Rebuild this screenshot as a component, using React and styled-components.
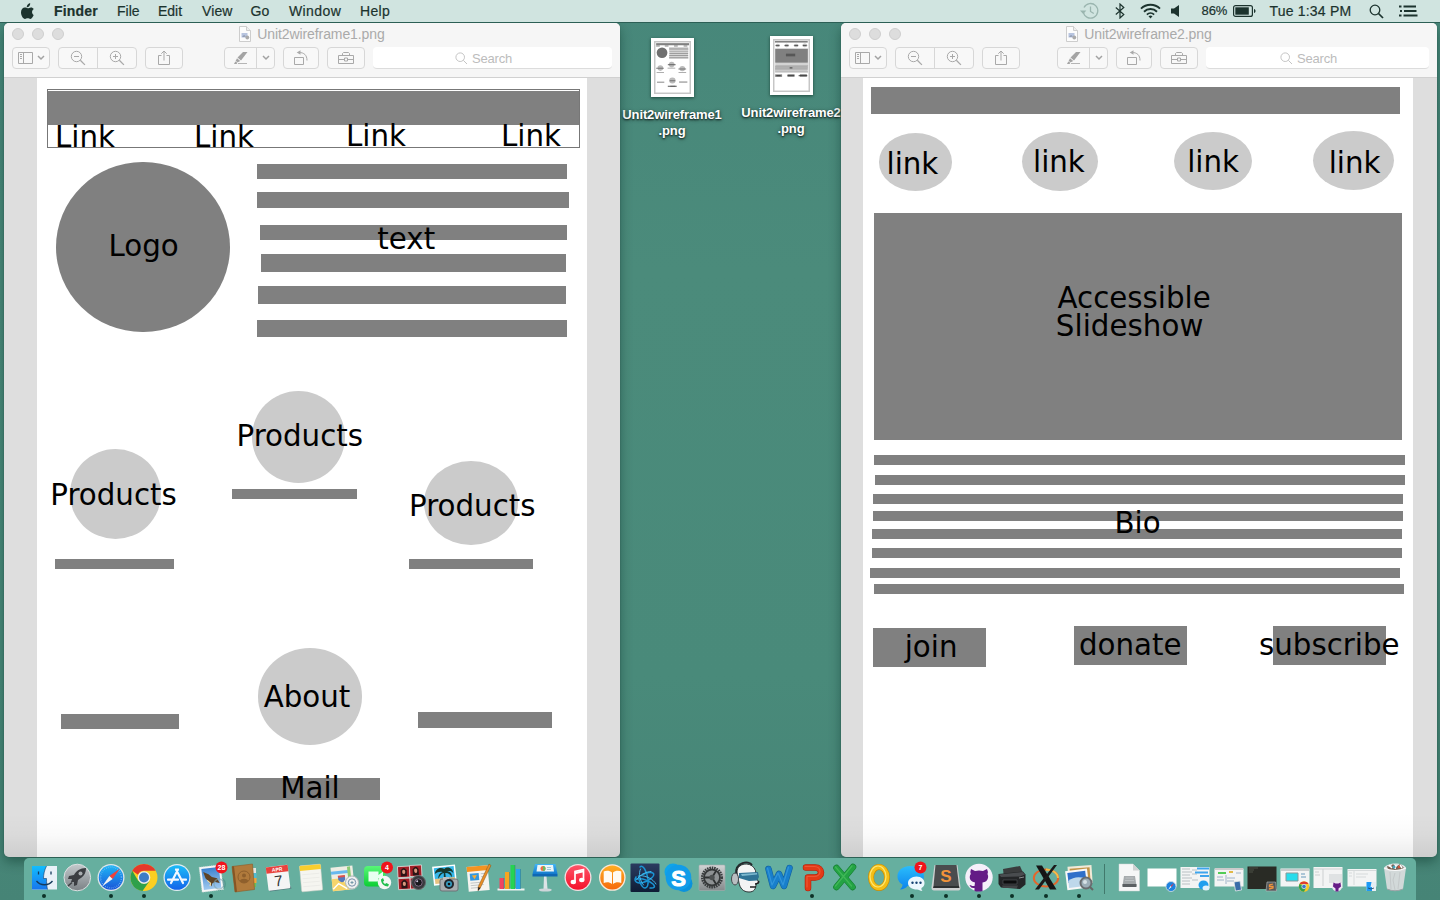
import React from "react";
import styled, { createGlobalStyle } from "styled-components";

const Global = createGlobalStyle`
  * { box-sizing: border-box; }
  html, body { margin: 0; padding: 0; overflow: hidden; }
  body { font-family: "Liberation Sans", Arial, sans-serif; }
  svg { display: block; flex: none; }
`;

const Desktop = styled.div`
  position: relative;
  display: flex;
  flex-direction: column;
  justify-content: space-between;
  width: 1440px;
  height: 900px;
  overflow: hidden;
  background: linear-gradient(180deg, #47877a 0%, #4b8b7b 30%, #498a7a 75%, #468476 100%);
`;

/* ---------- menu bar ---------- */

const MenuBar = styled.header`
  position: relative;
  z-index: 5;
  display: flex;
  align-items: center;
  height: 23px;
  padding-left: 20px;
  background: #d0e4e0;
  border-bottom: 1px solid #2c5f55;
  color: #1c332e;
  font-size: 14px;
  line-height: 22px;
  white-space: nowrap;
`;

const AppleSlot = styled.div`
  width: 34px;
`;

const MenuItem = styled.span`
  width: ${(p) => p.$w}px;
  font-weight: ${(p) => (p.$bold ? 700 : 400)};
  letter-spacing: ${(p) => p.$ls || 0}px;
  -webkit-text-stroke: 0.2px #1c332e;
`;

const StatusArea = styled.div`
  display: flex;
  align-items: center;
  height: 22px;
  margin-left: auto;
  width: 360px;
`;

const StatusSlot = styled.div`
  width: ${(p) => p.$w}px;
  font-size: ${(p) => p.$size || 14}px;
  letter-spacing: ${(p) => p.$ls || 0}px;
  -webkit-text-stroke: 0.2px #1c332e;
`;

/* ---------- windows ---------- */

const Window = styled.section`
  position: absolute;
  z-index: 2;
  left: ${(p) => p.$x}px;
  top: 23px;
  width: ${(p) => p.$w}px;
  height: 834px;
  display: flex;
  flex-direction: column;
  border-radius: 5px;
  overflow: hidden;
  background: #dedede;
`;

const WindowShadow = styled.div`
  position: absolute;
  z-index: 1;
  left: ${(p) => p.$x}px;
  top: 23px;
  width: ${(p) => p.$w}px;
  height: 834px;
  border-radius: 5px;
  box-shadow: 0 5px 12px rgba(0, 40, 30, 0.42), 0 0 1px rgba(0, 0, 0, 0.5);
`;

const Chrome = styled.div`
  flex: none;
  height: 55px;
  background: #f6f6f6;
  border-bottom: 1px solid #d1d1d1;
`;

const TitleRow = styled.div`
  display: grid;
  grid-template-columns: 60px 1fr 60px;
  align-items: center;
  height: 22px;
  padding: 0 8px;
`;

const Lights = styled.div`
  display: flex;
  gap: 8px;
`;

const Light = styled.span`
  width: 12px;
  height: 12px;
  border-radius: 50%;
  background: #dddddd;
  border: 1px solid #cecece;
`;

const Title = styled.div`
  display: flex;
  justify-content: center;
  align-items: center;
  gap: 6px;
  font-size: 14px;
  line-height: 22px;
  letter-spacing: -0.1px;
  color: #aaaaaa;
`;

const ToolRow = styled.div`
  display: flex;
  height: 22px;
  margin-top: 2px;
  padding: 0 8px;
`;

const ToolGroup = styled.div`
  display: flex;
  height: 22px;
  width: ${(p) => p.$w}px;
  margin-right: ${(p) => p.$mr}px;
  border: 1px solid #d7d7d7;
  border-radius: 4px;
  background: #f8f8f8;
`;

const ToolCell = styled.div`
  display: flex;
  flex: ${(p) => p.$flex || 1};
  align-items: center;
  justify-content: center;
  gap: ${(p) => p.$gap || 0}px;
  border-left: ${(p) => (p.$divided ? "1px solid #d7d7d7" : "none")};
`;

const SearchField = styled.div`
  display: flex;
  flex: 1;
  align-items: center;
  justify-content: center;
  gap: 4px;
  padding-right: 18px;
  padding-top: 1px;
  border-radius: 4px;
  background: #fff;
  border-bottom: 1px solid #dcdcdc;
  font-size: 13px;
  letter-spacing: -0.2px;
  color: #bcbcbc;
`;

const Viewer = styled.div`
  flex: 1;
  display: flex;
  position: relative;
  padding-left: ${(p) => p.$left}px;
`;

const BottomShade = styled.div`
  position: absolute;
  left: 0;
  right: 0;
  bottom: 0;
  height: 44px;
  background: linear-gradient(180deg, rgba(0, 0, 0, 0) 0%, rgba(0, 0, 0, 0.02) 50%, rgba(0, 0, 0, 0.075) 100%);
`;

const Page = styled.div`
  position: relative;
  width: ${(p) => p.$w}px;
  background: #fff;
`;

/* ---------- wireframe canvas ---------- */

const Block = styled.div`
  position: absolute;
  left: ${(p) => p.$x}px;
  top: ${(p) => p.$y}px;
  width: ${(p) => p.$w}px;
  height: ${(p) => p.$h}px;
  background: #808080;
`;

const Oval = styled(Block)`
  border-radius: 50%;
  background: ${(p) => (p.$dark ? "#808080" : "#cbcbcb")};
`;

const Frame = styled(Block)`
  background: transparent;
  border: 1px solid #777;
`;

const Label = styled.div`
  position: absolute;
  left: ${(p) => p.$x}px;
  top: ${(p) => p.$b - 24}px;
  font-family: "DejaVu Sans", sans-serif;
  font-size: 29.3px;
  line-height: 28px;
  letter-spacing: ${(p) => p.$ls || 0}px;
  color: #000;
  white-space: nowrap;
`;

/* ---------- desktop files ---------- */

const File = styled.div`
  position: absolute;
  left: ${(p) => p.$x}px;
  top: ${(p) => p.$y}px;
  width: 120px;
  display: flex;
  flex-direction: column;
  align-items: center;
  gap: 10px;
`;

const Thumb = styled.div`
  width: 43px;
  height: 59px;
  padding: 3px;
  background: #fff;
  box-shadow: 0 1px 3px rgba(0, 30, 20, 0.6);
`;

const FileName = styled.div`
  text-align: center;
  color: #fff;
  font-weight: 700;
  font-size: 13px;
  line-height: 16px;
  letter-spacing: -0.12px;
  text-shadow: 0 1px 2px rgba(0, 0, 0, 0.75), 0 1px 4px rgba(0, 0, 0, 0.4);
`;

/* ---------- dock ---------- */

const Dock = styled.footer`
  position: relative;
  z-index: 3;
  display: flex;
  width: 1392px;
  height: 42px;
  margin-left: 24px;
  padding-left: 3px;
  border-radius: 5px 5px 0 0;
  background: #66af9f;
`;

const DockItem = styled.div`
  flex: none;
  display: flex;
  flex-direction: column;
  align-items: center;
  width: ${(p) => p.$w || 33.42}px;
  padding-top: 2px;
`;

const RunDot = styled.span`
  width: 4px;
  height: 4px;
  border-radius: 50%;
  background: #0d3228;
`;

const DockDivider = styled.div`
  width: 16.2px;
  padding: 6px 0 6px 8px;
  &::before {
    content: "";
    display: block;
    width: 1px;
    height: 30px;
    background: #41796c;
  }
`;

/* ---------- toolbar icons ---------- */

const stroke = { fill: "none", stroke: "#a9a9a9", strokeWidth: 1 };

const SidebarIcon = () => (
  <svg width="15" height="12" viewBox="0 0 15 12" {...stroke}>
    <path d="M.5.5h14v11H.5zM5.5.5v11M2 2.5h2M2 4.5h2M2 6.5h2" />
  </svg>
);
const Chevron = () => (
  <svg width="8" height="6" viewBox="0 0 8 6" fill="none" stroke="#a2a2a2" strokeWidth="1.5">
    <path d="M1 1l3 3 3-3" />
  </svg>
);
const ZoomGlyph = ({ plus }) => (
  <svg width="16" height="16" viewBox="0 0 16 16" {...stroke}>
    <circle cx="6.5" cy="6.5" r="5.2" />
    <path d="M10.3 10.3l4.6 4.6" strokeWidth="1.3" />
    <path d={plus ? "M4 6.5h5M6.5 4v5" : "M4 6.5h5"} />
  </svg>
);
const ShareIcon = () => (
  <svg width="12" height="16" viewBox="0 0 12 16" {...stroke}>
    <path d="M3.5 5.5h-3v9h11v-9h-3M6 10.500V1M3.300 3.700L6 1l2.700 2.700" />
  </svg>
);
const MarkerIcon = () => (
  <svg width="16" height="14" viewBox="0 0 16 14">
    <path d="M14.500 1H10L4.500 6.500l3.500 3zM4 7.300L2.600 10l2.200 1.200L7.200 10zM2.300 10.500L1 13h2.500l1-1.300z" fill="#a4a4a4" />
    <path d="M5 12.500h9" stroke="#b5b5b5" />
  </svg>
);
const RotateIcon = () => (
  <svg width="16" height="16" viewBox="0 0 16 16" {...stroke}>
    <path d="M1.500 7.500h9v7h-9zM6 2.500c5 0 8 2.500 8 8" />
    <path d="M7.500.2v4.600L3.700 2.500z" fill="#a9a9a9" stroke="none" />
  </svg>
);
const ToolboxIcon = () => (
  <svg width="18" height="14" viewBox="0 0 18 14" {...stroke}>
    <path d="M1.500 4.500h15v8h-15zM1.500 8.500h6M10.500 8.500h6M7.500 7h3v3h-3zM5.500 4.500v-2l1-1h5l1 1v2" />
  </svg>
);
const SearchGlyph = () => (
  <svg width="13" height="13" viewBox="0 0 13 13" fill="none" stroke="#c4c4c4">
    <circle cx="5.200" cy="5.200" r="4.300" />
    <path d="M8.300 8.300l3.700 3.700" />
  </svg>
);
const DocIcon = () => (
  <svg width="12" height="16" viewBox="0 0 12 16">
    <path d="M.5.5h7l4 4v11H.5z" fill="#fcfcfc" stroke="#cdcdcd" />
    <path d="M7.500.5v4h4" fill="#eee" stroke="#cdcdcd" />
    <path d="M2.500 7h6v4.500h-6z" fill="#b7c4df" />
    <path d="M3 11l2-2 2 1.500z" fill="#8e97ad" />
    <circle cx="8.300" cy="11.500" r="1.900" fill="#aaa" />
  </svg>
);

function PreviewWindow({ x, w, name, gap, left, pageW, children }) {
  return (
    <>
      <WindowShadow $x={x} $w={w} />
      <Window $x={x} $w={w}>
        <Chrome>
          <TitleRow>
            <Lights><Light /><Light /><Light /></Lights>
            <Title><DocIcon /><span>{name}</span></Title>
          </TitleRow>
          <ToolRow>
            <ToolGroup $w={38} $mr={8}><ToolCell $gap={4}><SidebarIcon /><Chevron /></ToolCell></ToolGroup>
            <ToolGroup $w={79} $mr={8}>
              <ToolCell><ZoomGlyph /></ToolCell>
              <ToolCell $divided><ZoomGlyph plus /></ToolCell>
            </ToolGroup>
            <ToolGroup $w={38} $mr={gap}><ToolCell><ShareIcon /></ToolCell></ToolGroup>
            <ToolGroup $w={51} $mr={8}>
              <ToolCell $flex="0 0 31px"><MarkerIcon /></ToolCell>
              <ToolCell $divided><Chevron /></ToolCell>
            </ToolGroup>
            <ToolGroup $w={36} $mr={8}><ToolCell><RotateIcon /></ToolCell></ToolGroup>
            <ToolGroup $w={38} $mr={8}><ToolCell><ToolboxIcon /></ToolCell></ToolGroup>
            <SearchField><SearchGlyph /><span>Search</span></SearchField>
          </ToolRow>
        </Chrome>
        <Viewer $left={left}>
          <Page $w={pageW}>{children}</Page>
          <BottomShade />
        </Viewer>
      </Window>
    </>
  );
}

const homeBlocks = [
  [10.5, 13, 532, 34], [220, 86.3, 310.400, 15], [220, 114.400, 311.700, 15.200], [222.500, 146.700, 307.900, 15],
  [223.700, 176, 305.500, 17.700], [221, 208.200, 308, 17.800], [220, 241.600, 310.400, 17.700],
  [195.400, 411.200, 124.500, 10.300], [18, 480.500, 119.300, 10.300], [372.400, 480.500, 123.300, 10.300],
  [24.400, 636, 118, 15.300], [381.400, 633.500, 133.500, 16.300], [199, 700.200, 144, 21.800],
];
const homeOvals = [
  [19.300, 83.600, 173.400, 170.800, true], [215, 313.300, 93, 91.300], [32.500, 371, 91.700, 90.200],
  [387, 382.700, 93.500, 84], [221, 570, 104, 96.700],
];
const homeLabels = [
  ["Link", 18, 69], ["Link", 157, 69], ["Link", 309, 68], ["Link", 464, 68],
  ["Logo", 71.500, 177.500], ["text", 340.300, 171], ["Products", 199.500, 368], ["Products", 13.300, 426.500],
  ["Products", 372, 437.500], ["About", 226.700, 629.400], ["Mail", 243.200, 720.400],
];
const slideBlocks = [
  [7.500, 9, 529.400, 27], [11.400, 134.800, 528, 227.400],
  [11.400, 376.700, 530.500, 10], [12, 397, 530.400, 10.300], [9.500, 416, 530.400, 10.300], [10, 433.200, 530.400, 10],
  [9, 451, 530.400, 10.200], [9, 470.200, 530.400, 10.200], [7.200, 489.500, 530.200, 10.200], [11, 506.200, 530.400, 10.200],
  [10.400, 549.800, 112.700, 39.700], [210.700, 548, 113.300, 39.400], [409.800, 548, 113.300, 39.400],
];
const slideOvals = [
  [15.500, 55.300, 73, 57.700], [159, 54, 76, 59], [311, 54, 78, 58], [449.700, 52.700, 81, 59],
];
const slideLabels = [
  ["link", 23.500, 96], ["link", 170, 94], ["link", 324.200, 94], ["link", 465.700, 95],
  ["Accessible", 194.500, 230], ["Slideshow", 192.800, 258, 0.05], ["Bio", 251.500, 455.300],
  ["join", 41.700, 579], ["donate", 216, 577.400], ["subscribe", 396, 577],
];

const Wireframe = ({ blocks, ovals, labels, frame }) => (
  <>
    {blocks.map(([x, y, w, h]) => <Block key={`${x},${y}`} $x={x} $y={y} $w={w} $h={h} />)}
    {frame && <Frame $x={10} $y={11} $w={533} $h={59} />}
    {ovals.map(([x, y, w, h, dark]) => <Oval key={`${x},${y}`} $x={x} $y={y} $w={w} $h={h} $dark={dark} />)}
    {labels.map(([t, x, b, ls]) => <Label key={`${t}${x}`} $x={x} $b={b} $ls={ls}>{t}</Label>)}
  </>
);

/* Miniature of a wireframe, reduced from the same shape lists. */
const Mini = ({ blocks, ovals, children }) => (
  <svg width="37" height="53" viewBox="0 0 550 788" preserveAspectRatio="none">
    <rect x="11" y="11" width="528" height="766" fill="#fff" stroke="#c6c6c6" strokeWidth="22" />
    <g transform="translate(22 20) scale(.92 .92)">
      {blocks.map(([x, y, w, h]) => <rect key={`${x},${y}`} x={x} y={y} width={w} height={h} fill="#808080" />)}
      {ovals.map(([x, y, w, h, dark]) => (
        <ellipse key={`${x},${y}`} cx={x + w / 2} cy={y + h / 2} rx={w / 2} ry={h / 2} fill={dark ? "#707070" : "#bbb"} />
      ))}
      {children}
    </g>
  </svg>
);

/* ---------- dock artwork (34 x 34 each) ---------- */

const Svg = ({ children }) => <svg width="34" height="34" viewBox="0 0 34 34">{children}</svg>;
const Grad = ({ id, a, b, h }) => (
  <linearGradient id={id} x1="0" y1="0" x2={h ? 1 : 0} y2={h ? 0 : 1}>
    <stop stopColor={a} /><stop offset="1" stopColor={b} />
  </linearGradient>
);
const Badge = ({ x, y, t }) => (
  <>
    <circle cx={x} cy={y} r="6" fill="#f0131b" />
    <text x={x} y={y + 2.600} fontSize="7" fill="#fff" fontWeight="700" textAnchor="middle" fontFamily="Liberation Sans, sans-serif">{t}</text>
  </>
);
const Letter = ({ t, fill, size, y = 27, x = 17, font = "Liberation Sans", outline }) => (
  <text x={x} y={y} fontSize={size} fill={fill} fontWeight="700" textAnchor="middle" stroke={outline} strokeWidth={outline ? 1 : 0}
    fontFamily={`${font}, sans-serif`}>{t}</text>
);

const FinderArt = () => (
  <Svg>
    <defs><Grad id="fin" a="#12bdfd" b="#1876ee" /></defs>
    <rect x="5" y="6" width="25" height="23.500" fill="#e9f1f8" />
    <path d="M5 6h14.500c-2 4-3 8-3 12.500h3c0 4 .3 8 1 11H5z" fill="url(#fin)" />
    <path d="M11.500 11.500v3M24 11.500v3M9.500 21c4 5 12 5 16 0" fill="none" stroke="#153a5c" strokeWidth="1.300" />
    <path d="M19.500 6c-2 4-3 8-3 12.500h3c0 4 .3 8 1 11" fill="none" stroke="#163b66" strokeWidth=".6" />
  </Svg>
);
const LaunchArt = () => (
  <Svg>
    <defs><Grad id="lau" a="#c3c9cc" b="#7b8185" /></defs>
    <circle cx="17.300" cy="17.500" r="13.300" fill="url(#lau)" stroke="#dce2e3" />
    <path d="M26 8c-6 0-10 3-12 7l-5 1-1 3 4 0-1 3 3 0 0 4 3-1 1-5c5-3 8-6 8-12z" fill="#3b3e42" />
    <circle cx="20.500" cy="13.500" r="2" fill="#a8adb0" />
    <path d="M8 26l4-3.500" stroke="#3b3e42" strokeWidth="1.500" />
  </Svg>
);
const SafariArt = () => (
  <Svg>
    <defs><Grad id="saf" a="#1fb6f5" b="#1a55d8" /></defs>
    <circle cx="17" cy="17.500" r="13.500" fill="#dfe6ea" />
    <circle cx="17" cy="17.500" r="12.200" fill="url(#saf)" />
    <circle cx="17" cy="17.500" r="10.500" fill="none" stroke="#8cc9f8" strokeWidth="1.500" strokeDasharray=".5 1.500" />
    <path d="M26 8.500l-7.400 10.600-3.200-3.200z" fill="#f2413a" />
    <path d="M8 26.500l7.400-10.600 3.200 3.200z" fill="#f3f3f3" />
  </Svg>
);
const ChromeArt = () => (
  <Svg>
    <circle cx="17" cy="17.500" r="13.500" fill="#fbcf22" />
    <path d="M5.300 10.800A13.500 13.500 0 0 0 15.500 31L22.500 21l-5.500 3-6-3.500z" fill="#2fa04b" />
    <path d="M5.300 10.800A13.500 13.500 0 0 1 28.700 10.800H17a6.500 6.500 0 0 0-6 4z" fill="#e5392b" />
    <circle cx="17" cy="17.500" r="6.300" fill="#eee" />
    <circle cx="17" cy="17.500" r="5" fill="#3d7cc6" />
  </Svg>
);
const AppStoreArt = () => (
  <Svg>
    <defs><Grad id="aps" a="#1cbcf8" b="#1364ea" /></defs>
    <circle cx="17" cy="17.500" r="13.500" fill="#e1edf2" />
    <circle cx="17" cy="17.500" r="12.300" fill="url(#aps)" />
    <path d="M18 9.500l-7 13.500M16 9.500l7 13.500M8 19.700h10M21.500 19.700h4.500" stroke="#f3f8ff" strokeWidth="2.200" fill="none" strokeLinecap="round" />
  </Svg>
);
const MailArt = () => (
  <Svg>
    <defs><Grad id="mai" a="#3d82cf" b="#9fc9ef" /></defs>
    <circle cx="25" cy="24" r="7" fill="#4a9588" opacity=".7" />
    <g transform="rotate(-7 17 18)">
      <rect x="6.500" y="6" width="21.500" height="25" fill="#f6f7f7" stroke="#d4dada" strokeWidth=".6" strokeDasharray="1 1" />
      <rect x="8.500" y="8" width="17.500" height="21" fill="url(#mai)" />
      <path d="M10 11l5 3 3 3 5 2 2 5-4.500-1.500-3 1-1 3-2-5-3-4z" fill="#5f4325" />
      <path d="M13 20l3 3-1 3" fill="none" stroke="#f5dfa0" />
    </g>
    <circle cx="25" cy="24" r="5" fill="none" stroke="#7fa3ad" strokeWidth="1.500" opacity=".6" />
    <Badge x={27.500} y={7.500} t="28" />
  </Svg>
);
const ContactsArt = () => (
  <Svg>
    <path d="M26 8h3v5h-3z" fill="#e5e5e0" /><path d="M26 13h3.500v5H26z" fill="#53bcd2" />
    <path d="M26 18h3.500v5H26z" fill="#f0a63c" /><path d="M26 23h3v4h-3z" fill="#70bf55" />
    <path d="M5 6.500L25.500 4l2 25.500L8 32z" fill="#b07a3c" stroke="#8c5b26" strokeWidth=".6" />
    <path d="M5 6.500l2-.3 3 25.500-2 .3z" fill="#855525" />
    <circle cx="17" cy="17" r="6" fill="none" stroke="#8e5f2c" />
    <circle cx="17" cy="15.500" r="2" fill="#8e5f2c" /><path d="M12.800 21c1-3 7.500-3 8.500 0-2 2.500-6 2.500-8.500 0z" fill="#8e5f2c" />
  </Svg>
);
const CalendarArt = () => (
  <Svg>
    <path d="M8 29l21.500-3 1 2.500L9 31.500z" fill="#456" opacity=".6" />
    <g transform="rotate(-7 17 17)">
      <rect x="6" y="6" width="22" height="23.500" rx="1" fill="#f5f5f5" />
      <path d="M6 6h22v6.500H6z" fill="#e8423d" />
      <Letter t="APR" fill="#fff" size={5} y={11.200} />
      <text x="17" y="26" fontSize="15" fill="#333" textAnchor="middle" fontFamily="Liberation Sans, sans-serif">7</text>
    </g>
  </Svg>
);
const NotesArt = () => (
  <Svg>
    <g transform="rotate(-5 17 17)">
      <rect x="6.500" y="5" width="21" height="26" rx="1" fill="#f5f5f0" stroke="#d3d3c8" strokeWidth=".5" />
      <path d="M6.500 5h21v5h-21z" fill="#f8ce2e" />
      <path d="M8.500 14h17M8.500 18h17M8.500 22h17M8.500 26h17" stroke="#e8e8e3" strokeWidth=".7" />
    </g>
  </Svg>
);
const MapsArt = () => (
  <Svg>
    <g transform="rotate(-6 17 17)">
      <rect x="4.500" y="6.500" width="22" height="23.500" fill="#efede3" />
      <path d="M4.500 18h10l7 12H4.500z" fill="#f6d46a" /><path d="M4.500 10.500h17v3h-17z" fill="#68b9ee" />
      <path d="M21 7h3v15h-3z" fill="#8ccb72" />
      <path d="M11 15.500h7v4q-3.500 5-7 0z" fill="#5478bd" /><path d="M11 15h7v2h-7z" fill="#df514b" />
      <path d="M5 28l6-5 8 6" stroke="#fff" strokeWidth="1.500" fill="none" />
    </g>
    <circle cx="25" cy="22.500" r="6.500" fill="#eef0f0" stroke="#aeb7ba" />
    <circle cx="25" cy="22.500" r="3.700" fill="none" stroke="#7990aa" /><path d="M25 21v3M23.500 22.500h3" stroke="#79a" />
  </Svg>
);
const FaceTimeArt = () => (
  <Svg>
    <defs><Grad id="fac" a="#58f777" b="#0cce34" /></defs>
    <rect x="3" y="6" width="21.500" height="20.500" rx="4" fill="url(#fac)" />
    <path d="M7.500 11.500h10v10h-10zM17.500 15l4.500-3.500v10l-4.500-3.500z" fill="#e9fff0" />
    <circle cx="23.500" cy="22.500" r="6.700" fill="#f4f7f5" />
    <path d="M20 19.500c0 4 3 7 7 7l1-2-2.500-1.500-1.500 1c-1-.5-1.500-1.300-2-2.300l1.200-1L22 18z" fill="#21bf50" />
    <Badge x={26} y={7.500} t="4" />
  </Svg>
);
const PhotoBoothArt = () => (
  <Svg>
    <g transform="rotate(-3 17 17)">
      {[[4, 6], [16, 5.500], [4, 18], [16, 18]].map(([x, y]) => (
        <g key={`${x}-${y}`}>
          <rect x={x} y={y} width="12" height="11" fill="#a31d25" stroke="#eee" strokeWidth=".7" />
          <path d={`M${x + 3} ${y + 10}V${y + 4}q3-5 6 0v6z`} fill="#2b1416" />
          <ellipse cx={x + 6} cy={y + 5.500} rx="1.600" ry="2.200" fill="#d8967c" />
        </g>
      ))}
    </g>
    <circle cx="24.500" cy="22.500" r="7" fill="#383a3e" stroke="#65686c" />
    <circle cx="24.500" cy="22.500" r="3.700" fill="#17181c" stroke="#7c6780" /><circle cx="23.200" cy="21.200" r="1" fill="#c9c4dd" />
  </Svg>
);
const IPhotoArt = () => (
  <Svg>
    <g transform="rotate(-6 17 15)">
      <rect x="5" y="5.500" width="23" height="19" fill="#fff" />
      <path d="M6.500 7h20v12h-20z" fill="#36b7e9" /><path d="M6.500 18h20v5h-20z" fill="#e8c381" />
      <path d="M17 9c-4-3-9-1-10 4 3-2 6-2 8-1-3 0-5 3-5 6 2-3 4-5 6-5l-1 11h2.500l0-11c3 0 5 2 6 5 1-4-1-6-4-6 2-1 4-1 6 2 0-5-5-8-8.500-5z" fill="#16382c" />
    </g>
    <rect x="12" y="19" width="18" height="12" rx="2" fill="#a8adb0" stroke="#6c7377" />
    <path d="M15 17h6v3h-6z" fill="#babfc1" />
    <circle cx="21" cy="24" r="5" fill="#22262c" /><circle cx="21" cy="24" r="3" fill="#369cc1" /><circle cx="21" cy="24" r="1.300" fill="#111" />
  </Svg>
);
const PagesArt = () => (
  <Svg>
    <g transform="rotate(-5 17 17)">
      <rect x="6.500" y="6" width="21" height="25" fill="#f5f4f0" /><path d="M6.500 6h21v5h-21z" fill="#f59321" />
      <path d="M9 13h9v7H9z" fill="#3498df" /><path d="M11 15h5l-2.500 4z" fill="#f8ab32" />
      <path d="M9 22.500h13M9 25h13M9 27.500h10M20 14h4M20 17h4" stroke="#b9bcbc" strokeWidth=".8" />
    </g>
    <path d="M28 4l2 1.500-10.500 22-2.500 3 .3-4z" fill="#e98e26" stroke="#875214" strokeWidth=".5" /><path d="M17.300 27l2.200 1-2.500 3z" fill="#222" />
  </Svg>
);
const NumbersArt = () => (
  <Svg>
    <path d="M3.500 28.500h27v2h-27z" fill="#edf2f0" />
    <path d="M5.500 18h4.500v11H5.500z" fill="#f14360" /><path d="M11 12h4.500v17H11z" fill="#f8a51f" />
    <path d="M16.500 5H21v24h-4.500z" fill="#25d451" /><path d="M22 9h4.500v20H22z" fill="#28a5ed" />
    <path d="M10 18v11M15.500 12v17M21 5v24M26.500 9v20" stroke="#286b78" opacity=".4" />
  </Svg>
);
const KeynoteArt = () => (
  <Svg>
    <defs><Grad id="key" a="#43b5f4" b="#1379cd" /></defs>
    <path d="M16 16h2.500l1 13h-4z" fill="#dde3e6" /><ellipse cx="17.300" cy="30" rx="6.500" ry="1.600" fill="#cfd6da" />
    <path d="M7 4h20.500L29.500 14H4.500z" fill="url(#key)" /><path d="M4.500 14h25v2.500h-25z" fill="#0f67b3" />
    <path d="M9.500 5h15.500l1 6.500H8.500z" fill="#edf6f8" /><circle cx="15" cy="8.500" r="2.500" fill="#ed6f49" /><path d="M15 6a2.500 2.500 0 0 1 0 5z" fill="#66bd63" /><path d="M19 7.500h4M19 9.500h4" stroke="#9fc8d8" />
  </Svg>
);
const ITunesArt = () => (
  <Svg>
    <defs><Grad id="itu" a="#ff5267" b="#f4122b" /></defs>
    <circle cx="17" cy="17.500" r="13.500" fill="#f4dfe1" /><circle cx="17" cy="17.500" r="12.200" fill="url(#itu)" />
    <path d="M14 21.500V11.500l8.500-2v10" fill="none" stroke="#fff" strokeWidth="1.700" /><path d="M14 12l8.500-2v2.300l-8.500 2z" fill="#fff" />
    <ellipse cx="12.300" cy="22" rx="2.700" ry="2.200" fill="#fff" /><ellipse cx="20.800" cy="20" rx="2.700" ry="2.200" fill="#fff" />
  </Svg>
);
const IBooksArt = () => (
  <Svg>
    <defs><Grad id="ibo" a="#ffad21" b="#f66a0d" /></defs>
    <circle cx="17.300" cy="17.500" r="13.300" fill="#f8e9da" /><circle cx="17.300" cy="17.500" r="12" fill="url(#ibo)" />
    <path d="M17 12.500c-2-2-6-2-8.300-1v11.500c2.500-1 6-1 8.300 1zM18 12.500c2-2 6-2 8.300-1v11.500c-2.500-1-6-1-8.300 1z" fill="#fffaf2" />
  </Svg>
);
const BattleArt = () => (
  <Svg>
    <defs><Grad id="bat" a="#2b3b60" b="#0e1d35" /></defs>
    <rect x="2.500" y="3.500" width="29" height="28.500" rx="1" fill="url(#bat)" />
    <g fill="none" stroke="#1a93d3" strokeWidth="1.500" strokeLinecap="round">
      <path d="M12 7c3-3 7 5 8 12 .6 5-.5 9-3 9-3 0-6-6-6.500-12" />
      <path d="M8 17c-3 5 2 7 7 5.500C21 21 27 16 25.500 13.500c-1.500-2-7-1-11 1" />
      <path d="M8 19c5-1 12 1 17 5 3 3 1 4.500-3 4" />
      <path d="M12.500 9c-2 4-1 11 3 16M23 11.500c-5 0-12 4-14.500 8.500M28 24c-3-5-9-8-16-8.500" stroke="#49c2f3" strokeWidth=".9" />
    </g>
  </Svg>
);
const SkypeArt = () => (
  <Svg>
    <circle cx="12" cy="12" r="8.500" fill="#0fa4ea" /><circle cx="23" cy="23.500" r="8.500" fill="#0b92dc" /><circle cx="17.500" cy="17.500" r="12.800" fill="#119ce8" />
    <Letter t="S" fill="#fff" size={22} y={25.500} x={17.500} outline="#fff" />
  </Svg>
);
const PrefsArt = () => (
  <Svg>
    <defs><Grad id="pre" a="#d2d4d5" b="#858a8c" /></defs>
    <rect x="4" y="5" width="26" height="25.500" rx="1" fill="url(#pre)" stroke="#a7adaf" strokeWidth=".6" />
    <circle cx="17" cy="17.500" r="9.800" fill="none" stroke="#393c3e" strokeWidth="2.400" strokeDasharray="1.600 .8" />
    <circle cx="17" cy="17.500" r="8" fill="#8d9193" stroke="#343738" strokeWidth="1.800" />
    <path d="M17 17.500h-7.500M17 17.500l4-6.500M17 17.500l4 6.500" stroke="#2e3132" strokeWidth="1.800" /><circle cx="17" cy="17.500" r="2.700" fill="#4c5051" />
  </Svg>
);
const HeadArt = () => (
  <Svg>
    <path d="M9 12C9 1 28 1 28 14l1 5 2 4-3 1c0 5-2 8-7 8-6 0-9-4-10-9z" fill="#f3f4f4" stroke="#202426" strokeWidth=".9" />
    <path d="M8 14C7 2 21 0 24 5" fill="none" stroke="#23282b" strokeWidth="1.800" />
    <ellipse cx="7" cy="19" rx="3.500" ry="6" fill="#babfc2" stroke="#464c50" />
    <path d="M11 13l19-1 1 5-2 3.500-8 .5-10-3z" fill="#2f7395" /><path d="M13 14l16-1v1.500l-15 1.500z" fill="#7cb8ce" /><path d="M22 27h6M27 24q3 0 4-3" stroke="#222" fill="none" strokeWidth="1.300" />
  </Svg>
);
const Tube = ({ d, dark, main, light }) => (
  <Svg>
    <g fill="none" strokeLinecap="round" strokeLinejoin="round">
      <path d={d} stroke={dark} strokeWidth="6.500" /><path d={d} stroke={main} strokeWidth="5.400" />
      <path d={d} stroke={light} strokeWidth="1.200" transform="translate(-1 -1)" opacity=".4" />
    </g>
  </Svg>
);
const WordArt = () => <Tube d="M6.500 9l4.500 17 6-12 5 12 5.500-18" dark="#125f9c" main="#187fcc" light="#5bb6ee" />;
const PowerArt = () => <Tube d="M13 28V17.500h7c8 0 8-10 0-10h-9" dark="#ae210c" main="#e33a17" light="#f98261" />;
const ExcelArt = () => <Tube d="M8.500 8l16 19M25 7L8.500 27" dark="#127a2c" main="#23a344" light="#6bd873" />;
const OutlookArt = () => (
  <Svg>
    <ellipse cx="17" cy="17.500" rx="8" ry="10.500" fill="none" stroke="#c68c08" strokeWidth="6" /><ellipse cx="17" cy="17.300" rx="8" ry="10.500" fill="none" stroke="#f4bf16" strokeWidth="4.700" />
    <ellipse cx="16" cy="16.500" rx="8" ry="10.500" fill="none" stroke="#ffe672" strokeWidth="1.200" />
  </Svg>
);
const MessagesArt = () => (
  <Svg>
    <defs><Grad id="mes" a="#2abdfb" b="#0d83ed" /></defs>
    <path d="M15.500 6C7 6 2 11 2.500 17c.3 4 3 6.500 5 7.500 0 2-1 3.500-2.500 5 3 0 6-1.500 7.500-3.500C24 27 29 22 29 16 29 10 23 6 15.500 6z" fill="url(#mes)" />
    <path d="M21.500 16.500c-5 0-8.500 3-8.500 6.500 0 4 4 6.500 9 6.500 2 0 3 1.500 5.500 1.500-1-1-1.300-2-1-3 2-1 3-3 3-5 0-3.500-3-6.500-8-6.500z" fill="#ecf7fd" />
    <circle cx="17.500" cy="22.700" r="1.200" fill="#154272" /><circle cx="21.500" cy="22.700" r="1.200" fill="#154272" /><circle cx="25.500" cy="22.700" r="1.200" fill="#154272" />
    <Badge x={25.500} y={7.500} t="7" />
  </Svg>
);
const SublimeArt = () => (
  <Svg>
    <path d="M5.500 5h23l3 22.500q0 3-2 3H5q-2.500 0-2.500-3z" fill="#ced0d1" />
    <path d="M6.500 5h21l2.500 21H4.500z" fill="#4a4c4e" /><path d="M4.500 26h25.500l.5 2H4z" fill="#2d2f31" />
    <Letter t="S" fill="#f2933a" size={17} y={21.500} />
  </Svg>
);
const GithubArt = () => (
  <Svg>
    <circle cx="17" cy="17.500" r="13.700" fill="#f5effa" />
    <path d="M9 9l4 2q4-1 8 0l4-2q1.500 3 .5 5 1 2 .5 4-1 4-5.500 4.500v8.500q-4 1-8 0v-3c-3 .5-4-1-5-3 2 0 2 1.500 5 1l.5-3.500C8.500 21.500 7.500 19 7.800 16.500q0-1.500 1-2.500-.8-2.500.2-5z" fill="#641b86" />
  </Svg>
);
const PrinterArt = () => (
  <Svg>
    <path d="M8 9l17-3 4 9-20 3z" fill="#3a3c3d" /><path d="M3.500 14L28 11.500l2.500 3v10L25 29 6 27.500 3.500 24z" fill="#242628" />
    <path d="M4 14.500L27.500 12l2.500 2.500-5 2-19 .5z" fill="#494c4f" /><path d="M8 20h14v4H8z" fill="#0c0d0e" stroke="#54585a" strokeWidth=".6" /><path d="M7 25.500h16l-1 2.500H8z" fill="#414446" />
    <path d="M24 18l5-1" stroke="#8b8e90" />
  </Svg>
);
const XArt = () => (
  <Svg>
    <ellipse cx="17" cy="18" rx="12.200" ry="8.500" fill="none" stroke="#e4662b" strokeWidth="2" />
    <path d="M17 9.500a12.200 8.500 0 0 1 12 8.500" fill="none" stroke="#f6bd4a" strokeWidth="1.800" />
    <path d="M7 5.500h6L27.500 29.500H21z" fill="#151515" /><path d="M25 5h3L10 29.500H6z" fill="#1b1b1b" />
  </Svg>
);
const PreviewArt = () => (
  <Svg>
    <g transform="rotate(-4 17 14)"><rect x="6" y="6" width="24" height="18" fill="#f2ead8" /><path d="M8 8h20v11H8z" fill="#c29347" /></g>
    <g transform="rotate(-7 14 18)"><rect x="4" y="10" width="22" height="19" fill="#f8f8f8" /><path d="M6 12h18v10H6z" fill="#2f6fc9" /><path d="M6 20q8-5 18 0v7H6z" fill="#bed8eb" /></g>
    <circle cx="24" cy="23" r="5.500" fill="#9caeb8" stroke="#696d70" strokeWidth="2" /><path d="M28 27l3 3" stroke="#656565" strokeWidth="2" /><circle cx="23" cy="22" r="2" fill="#d6e2e7" />
  </Svg>
);
const FileArt = () => (
  <Svg>
    <path d="M7 4h14l6.500 6.500V31H7z" fill="#f6f7f7" stroke="#d2d6d6" strokeWidth=".5" /><path d="M21 4v6.500h6.500z" fill="#cfd2d2" />
    <path d="M12 16h11l1.500 10h-14z" fill="#a7acae" /><path d="M10.500 24h14v3h-14z" fill="#5b6063" /><path d="M13.500 18h8M13 20.500h9" stroke="#bdc2c4" />
  </Svg>
);
const TrashArt = () => (
  <Svg>
    <path d="M6 8c3-6 20-6 22 0l-2 3H8z" fill="#dfe3e4" /><path d="M9 6l3 1 3-3 3 3 4-3 4 4-3 2H10z" fill="#796253" /><path d="M11 5l3 3M18 5l-1 4M22 5l2 3" stroke="#fff" strokeWidth="1.500" /><circle cx="16" cy="7" r="1.500" fill="#42a7bf" /><circle cx="21" cy="7" r="1.200" fill="#d3553b" />
    <path d="M6 8q11 5 22 0l-3 21q-8 3.500-16 0z" fill="#d8dbdc" opacity=".95" /><path d="M6 8q11 5 22 0" fill="none" stroke="#f7f8f8" strokeWidth="1.200" />
    <path d="M12 12l1 17M17 13l-2 7 2 10M22 12l-2 17" stroke="#c4c9ca" fill="none" /><path d="M9 29q8 3.500 16 0" stroke="#9ea5a8" fill="none" />
  </Svg>
);

/* A minimised window: its thumbnail, with the small mark of its application. */
const Minimised = ({ top, height, fill = "#f3f4f4", kind, mark }) => (
  <Svg>
    <rect x="2.500" y={top} width="29" height={height} fill={fill} />
    {kind === "chat" && <path d="M4 9h8M4 12h10M4 15h8M4 18h10M4 21h8M4 24h8M14 10h5M14 14h5M14 20h6" stroke="#aab4b8" strokeWidth=".8" />}
    {kind === "chat" && <path d="M19 8.500h12M17 12.500h13M22 16h9" stroke="#3ea5ed" strokeWidth="1.800" />}
    {kind === "mail" && <><path d="M3 9h28" stroke="#ccc" strokeWidth="2" /><path d="M6 12h8v2H6z" fill="#52cc57" /><path d="M17 11h4v2h-4z" fill="#e1b948" /><path d="M14 15v9M15 18h8M15 21h7M24 13h5M5 17h6M5 20h7" stroke="#8ba4bf" strokeWidth=".8" /></>}
    {kind === "code" && <path d="M4 8h9M4 10h5M4 12h4" stroke="#575c4e" strokeWidth=".8" />}
    {kind === "web" && <><path d="M3 10h28" stroke="#c8cccd" strokeWidth="2" /><path d="M8 13h12v8H8z" fill="#27dceb" stroke="#899" /><path d="M23 14h4M23 17h5" stroke="#69b" /></>}
    {kind === "repo" && <><path d="M3 9h28M12 9v17M4 12h4M4 15h5" stroke="#cdd0d1" /><path d="M18 14h13v9H18z" fill="#dfe2e3" /></>}
    {kind === "files" && <path d="M3 10.500h28M9 11v14M11 14h12M11 17h10M4 13h3M4 16h3" stroke="#d6dadb" />}
    {mark === "safari" && <><circle cx="26" cy="26.500" r="5" fill="#1f82df" stroke="#d4e0e6" strokeWidth=".8" /><path d="M29 23l-2.500 4-1-1z" fill="#e34" /><path d="M23 30l3.500-3-1-1z" fill="#fff" /></>}
    {mark === "messages" && <><ellipse cx="25.500" cy="25" rx="5" ry="4.500" fill="#209fee" /><ellipse cx="28" cy="28" rx="3.500" ry="2.500" fill="#e2f2fa" /></>}
    {mark === "stamp" && <path d="M22 22l6-1 1.500 9-6 1z" fill="#396da9" stroke="#e5e8e9" strokeWidth=".8" />}
    {mark === "sublime" && <><path d="M22 22h8.500l1 9H21z" fill="#55585a" stroke="#b7babb" strokeWidth=".6" /><path d="M28 24l-3.500 1v1.500l3.500 0v1.500l-4 1" stroke="#ef943c" strokeWidth="1.300" fill="none" /></>}
    {mark === "chrome" && <><circle cx="26" cy="26.500" r="5.200" fill="#f4c927" /><path d="M21.500 24a5.200 5.200 0 0 1 9 0H26z" fill="#df3c30" /><path d="M21.500 24a5.200 5.200 0 0 0 4.500 7.700l2-4-2-2z" fill="#31a14d" /><circle cx="26" cy="26.500" r="2.200" fill="#3879cb" stroke="#eee" strokeWidth=".7" /></>}
    {mark === "github" && <><circle cx="26" cy="26.500" r="5" fill="#ede4f2" /><path d="M22.500 22.500l2 1h3l2-1 .5 4-2.500 2v3h-3v-3l-2.500-2z" fill="#661c87" /></>}
    {mark === "finder" && <><path d="M21.500 22H31v9h-9.500z" fill="#e7eef3" /><path d="M21.500 22h5l-1 5h1.500v4h-5.500z" fill="#1e9af5" /><path d="M23 28q3 2 6 0" stroke="#194061" fill="none" strokeWidth=".8" /></>}
  </Svg>
);

const apps = [
  [FinderArt, true], [LaunchArt], [SafariArt, true], [ChromeArt, true], [AppStoreArt], [MailArt, true], [ContactsArt],
  [CalendarArt], [NotesArt], [MapsArt], [FaceTimeArt], [PhotoBoothArt], [IPhotoArt], [PagesArt], [NumbersArt], [KeynoteArt],
  [ITunesArt], [IBooksArt], [BattleArt], [SkypeArt], [PrefsArt], [HeadArt], [WordArt], [PowerArt, true], [ExcelArt],
  [OutlookArt], [MessagesArt, true], [SublimeArt, true], [GithubArt, true], [PrinterArt, true], [XArt, true], [PreviewArt, true],
];
const minimised = [
  { top: 8.500, height: 18, fill: "#fff", mark: "safari" },
  { top: 7, height: 21, kind: "chat", mark: "messages" },
  { top: 8.500, height: 18, kind: "mail", mark: "stamp" },
  { top: 6.500, height: 22.500, fill: "#292b25", kind: "code", mark: "sublime" },
  { top: 8.500, height: 18, kind: "web", mark: "chrome" },
  { top: 7, height: 21, kind: "repo", mark: "github" },
  { top: 9, height: 17.500, kind: "files", mark: "finder" },
];

/* ---------- menu bar icons ---------- */

const ink = "#1c332e";
const AppleMark = () => (
  <svg width="15" height="17" viewBox="0 0 15 17" fill={ink}>
    <path d="M10.200.3c.1 1.200-.4 2.200-1 2.900-.7.800-1.600 1.200-2.400 1.100-.1-1.100.4-2.100 1-2.800C8.500.8 9.500.3 10.200.3zM13.700 12.100c-.7 1.600-1.900 3.800-3.300 3.800-1 0-1.500-.6-2.700-.6s-1.700.6-2.700.6C3 15.900 1 12.400 1 9.200 1 6.200 2.900 4.500 4.900 4.500c1.200 0 2 .7 2.900.7.800 0 1.700-.8 3.200-.8 1.100 0 2.200.6 2.800 1.600-2.500 1.500-2 4.900-.1 6.100z" />
  </svg>
);
const TimeMachine = () => (
  <svg width="19" height="18" viewBox="0 0 19 18" fill="none" stroke="#9ab5af" strokeWidth="1.300">
    <path d="M3.300 10A7.300 7.300 0 1 0 4 5.500M10.500 4.500V9.500l3.300 2" /><path d="M0 8.500h6.400L3.200 12z" fill="#9ab5af" stroke="none" />
  </svg>
);
const Bluetooth = () => (
  <svg width="10" height="16" viewBox="0 0 10 16" fill="none" stroke={ink} strokeWidth="1.200">
    <path d="M.8 4.500l8 7L5 15V1l3.800 3.500-8 7" />
  </svg>
);
const Wifi = () => (
  <svg width="21" height="16" viewBox="0 0 21 16" fill="none" stroke={ink} strokeWidth="1.900">
    <path d="M1 5.600a13.500 13.500 0 0 1 19 0M4 8.700a9.300 9.300 0 0 1 13 0M6.900 11.600a5.200 5.200 0 0 1 7.200 0" />
    <path d="M8.500 13.200q2-1.500 4 0l-2 2.300z" fill={ink} stroke="none" />
  </svg>
);
const Speaker = () => (
  <svg width="9" height="12" viewBox="0 0 9 12" fill={ink}><path d="M0 3.500h3L8 0v12L3 8.500H0z" /></svg>
);
const Battery = () => (
  <svg width="23" height="12" viewBox="0 0 23 12">
    <rect x=".6" y=".6" width="18.800" height="10.800" rx="2" fill="none" stroke={ink} strokeWidth="1.200" />
    <path d="M2.300 2.300h13.500v7.400H2.300z" fill={ink} /><path d="M21 4c2 .5 2 3.500 0 4z" fill={ink} />
  </svg>
);
const Spotlight = () => (
  <svg width="15" height="15" viewBox="0 0 15 15" fill="none" stroke={ink} strokeWidth="1.300">
    <circle cx="6" cy="6" r="4.800" /><path d="M9.500 9.500l4.500 4.500" strokeWidth="1.700" />
  </svg>
);
const ListMark = () => (
  <svg width="19" height="12" viewBox="0 0 19 12" stroke={ink} strokeWidth="2">
    <path d="M0 1.500h2.500M4.500 1.500H17M1 6h2M5 6h12.500M0 10.500h2.500M4.500 10.500H18.500" />
  </svg>
);

export default function App() {
  return (
    <Desktop>
      <Global />
      <MenuBar>
        <AppleSlot><AppleMark /></AppleSlot>
        <MenuItem $w={63} $bold $ls={0.2}>Finder</MenuItem>
        <MenuItem $w={41}>File</MenuItem>
        <MenuItem $w={44}>Edit</MenuItem>
        <MenuItem $w={48.500} $ls={0.1}>View</MenuItem>
        <MenuItem $w={38.500}>Go</MenuItem>
        <MenuItem $w={71} $ls={0.4}>Window</MenuItem>
        <MenuItem $w={40} $ls={0.3}>Help</MenuItem>
        <StatusArea>
          <StatusSlot $w={35}><TimeMachine /></StatusSlot>
          <StatusSlot $w={25}><Bluetooth /></StatusSlot>
          <StatusSlot $w={30.500}><Wifi /></StatusSlot>
          <StatusSlot $w={31}><Speaker /></StatusSlot>
          <StatusSlot $w={31} $size={13} $ls={-0.1}>86%</StatusSlot>
          <StatusSlot $w={37} ><Battery /></StatusSlot>
          <StatusSlot $w={99.500} $ls={0.2}>Tue 1:34 PM</StatusSlot>
          <StatusSlot $w={29.500}><Spotlight /></StatusSlot>
          <ListMark />
        </StatusArea>
      </MenuBar>

      <File $x={612} $y={38}>
        <Thumb><Mini blocks={homeBlocks} ovals={homeOvals}>
          <path d="M10 60h60M150 60h60M300 60h60M455 60h60M10 420h125M200 360h125M370 430h125M230 620h90M240 710h80" stroke="#555" strokeWidth="17" opacity=".7" />
        </Mini></Thumb>
        <FileName>Unit2wireframe1<br />.png</FileName>
      </File>
      <File $x={731} $y={36}>
        <Thumb><Mini blocks={slideBlocks} ovals={slideOvals}>
          <path d="M20 84h60M165 84h60M320 84h60M460 84h60M185 225h150M185 250h150M245 445h45M30 570h70M210 570h110M390 570h140" stroke="#333" strokeWidth="17" opacity=".7" />
        </Mini></Thumb>
        <FileName>Unit2wireframe2<br />.png</FileName>
      </File>

      <PreviewWindow x={4} w={616} name="Unit2wireframe1.png" gap={41} left={33} pageW={550}>
        <Wireframe blocks={homeBlocks} ovals={homeOvals} labels={homeLabels} frame />
      </PreviewWindow>
      <PreviewWindow x={841} w={596} name="Unit2wireframe2.png" gap={37} left={22} pageW={550.400}>
        <Wireframe blocks={slideBlocks} ovals={slideOvals} labels={slideLabels} />
      </PreviewWindow>

      <Dock>
        {apps.map(([Art, running], i) => (
          <DockItem key={i}><Art />{running && <RunDot />}</DockItem>
        ))}
        <DockDivider />
        <DockItem $w={33.250}><FileArt /></DockItem>
        {minimised.map((m, i) => <DockItem key={i} $w={33.250}><Minimised {...m} /></DockItem>)}
        <DockItem $w={33.250}><TrashArt /></DockItem>
      </Dock>
    </Desktop>
  );
}
